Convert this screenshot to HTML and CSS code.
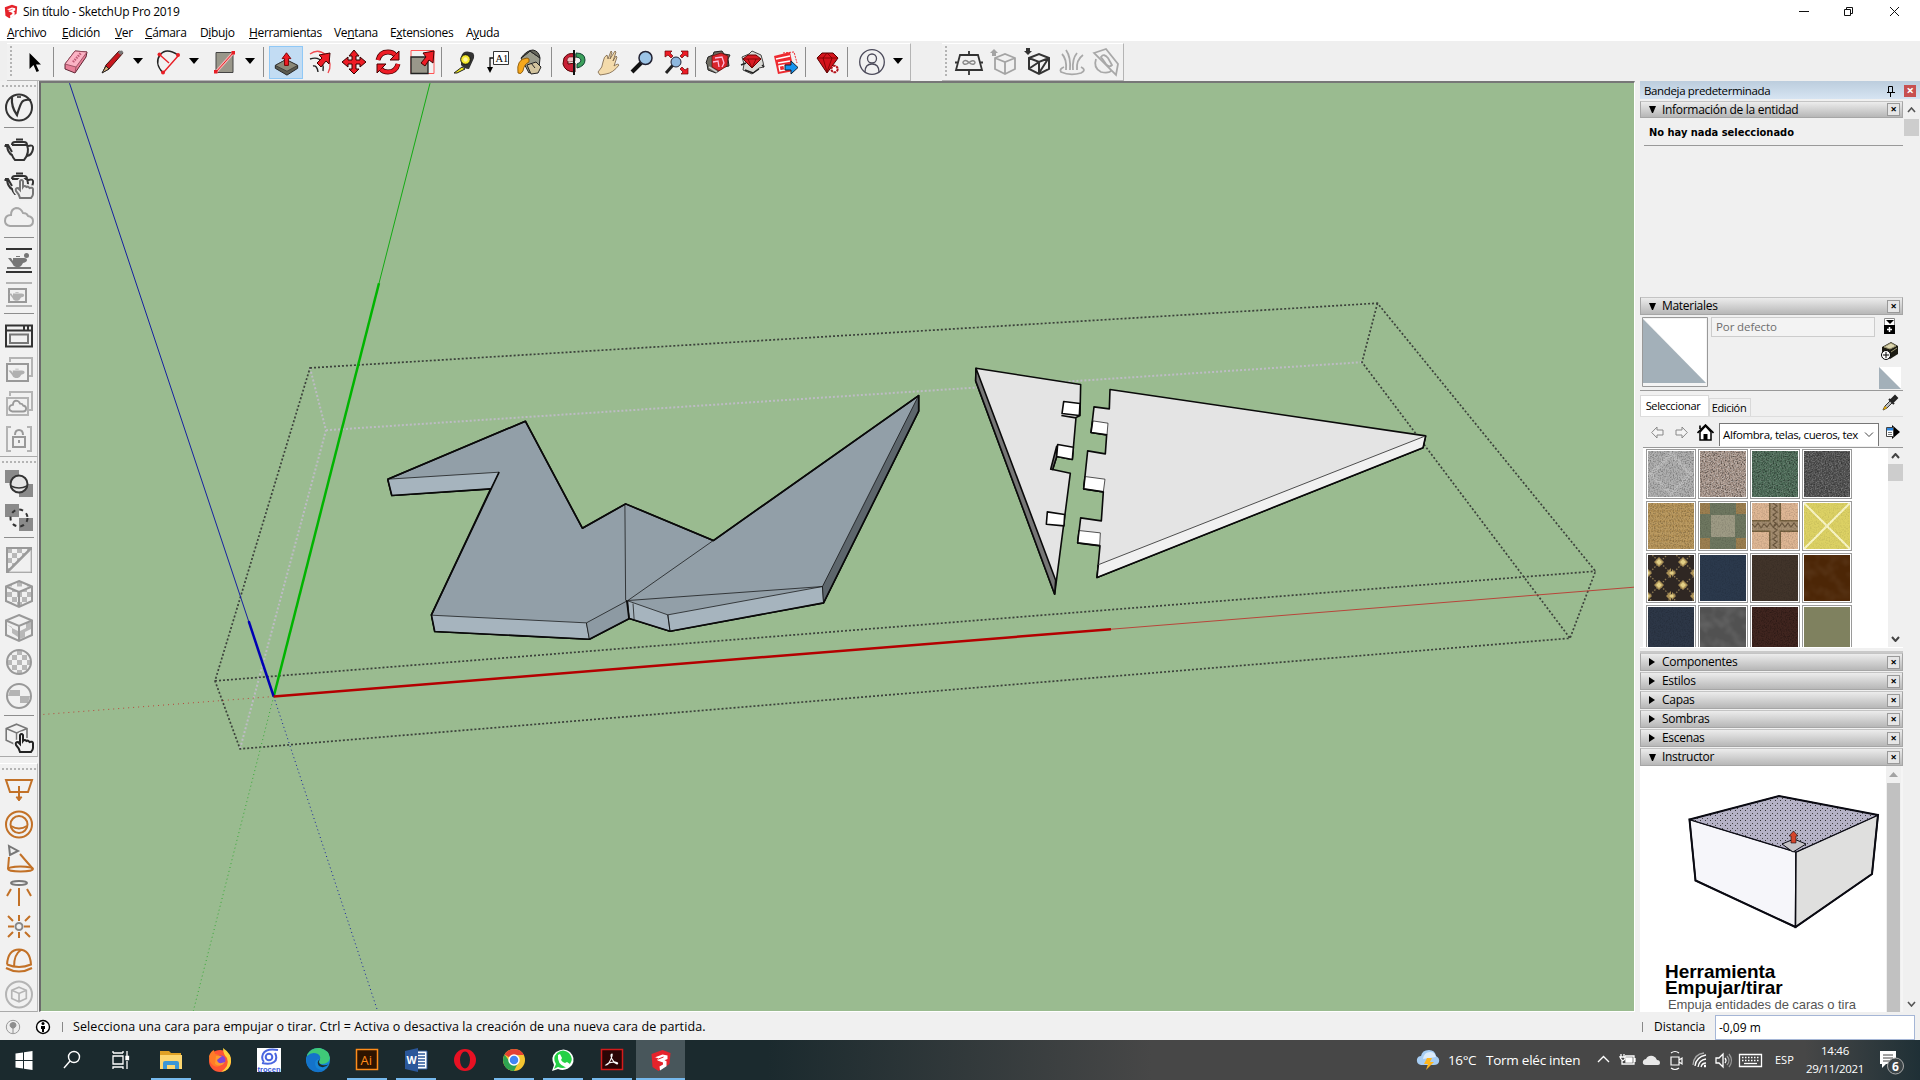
FILE: index.html
```html
<!DOCTYPE html>
<html lang="es">
<head>
<meta charset="utf-8">
<title>Sin título - SketchUp Pro 2019</title>
<link rel="stylesheet" href="styles.css">
</head>
<body>
<svg class="defs" width="0" height="0">
  <defs>
    <filter id="grain" x="0" y="0" width="100%" height="100%"><feTurbulence type="fractalNoise" baseFrequency=".75" numOctaves="2" seed="4"/><feColorMatrix values="0 0 0 0 0  0 0 0 0 0  0 0 0 0 0  2.6 0 0 0 -1.1"/></filter>
    <filter id="grainlight" x="0" y="0" width="100%" height="100%"><feTurbulence type="fractalNoise" baseFrequency=".7" numOctaves="2" seed="9"/><feColorMatrix values="0 0 0 0 1  0 0 0 0 1  0 0 0 0 1  2.6 0 0 0 -1.1"/></filter>
    <filter id="mottle" x="0" y="0" width="100%" height="100%"><feTurbulence type="fractalNoise" baseFrequency=".09" numOctaves="2" seed="2"/><feColorMatrix values="0 0 0 0 1  0 0 0 0 1  0 0 0 0 1  1.6 0 0 0 -.6"/></filter>
    <pattern id="dots" width="5" height="5" patternUnits="userSpaceOnUse"><g stroke="none"><rect width="5" height="5" fill="#b5b2c6"/><rect width="1" height="1" fill="#333"/><rect x="2" y="3" width="1" height="1" fill="#444"/></g></pattern>
    <pattern id="diamond" width="24" height="23" patternUnits="userSpaceOnUse"><rect width="24" height="23" fill="#2f2723"/><path d="M0 19 12 31M0 19 24-5M12 31 24 19M0-4 24 19" fill="none" stroke="#8a7650" stroke-width="1.300" stroke-dasharray="1.500 1.500"/><path d="M11 2l5 5-5 5-5-5zM-1 13l5 5-5 5zM23 13l-5 5 5 5z" fill="#a98f55"/><path d="M11 4l3 3-3 3-3-3zM0 16l2 2-2 2zM24 16l-3 2 3 2z" fill="#e2cf86"/></pattern>
    <pattern id="check" width="10" height="10" patternUnits="userSpaceOnUse"><path d="M0 0h5v5H0zM5 5h5v5H5z" fill="#b8b8b8"/></pattern>
    <path id="pot" d="M9 7Q9 4 12 4h9q3 0 3 3M13 1.500h7M9 7h15q3 8-3 15h-9q-2-2-3-5-4-2-5-9H1.500M9 14 5 7H2M25 8q6-2 5 3-1 6-6 7"/>
    <path id="minipot" d="M-5-3H6q3 0 3 2t-4 3q-2 4-4 4h-3q-3-1-4-4l-4-5h3l2 3zM-2-5h4v1h-4z"/>
    <path id="cloud" d="M8 25h18q5 0 5-5 0-4-5-5-1-3-5-3-2-5-7-5-5 1-5 7-6 0-6 6 0 4 5 5z"/>
    <path id="cube" d="M17 4 30 9.500V24L17 30 4 24V9.500zM4 9.500l13 5.500 13-5.500M17 15v15"/>
    <path id="handp" d="M16 30q-1-4-4-7-1-3 2-3l2 2V13q1.500-2 3 0v6q1.500-2 3.500 0 1.500-1 3 1 3-1 3.500 1v5q0 2-2 4z"/>
    <g id="sk"><path d="M1 5 12 1l8 3-1 11-11 7-6-4z" fill="#e5232b"/><path d="M4 8.500 12 5.500l5 1v3.500l-3 1.200 2 1v5l-6.500 4.300-.5-4 3.500-2v-2L7 11.500v-2z" fill="#fff"/><path d="M4 8.500l4 1.500 5-2" fill="none" stroke="#e5232b" stroke-width="1"/></g>
  </defs>
</svg>
<div class="app">
  <header class="titlebar">
    <svg class="logo" width="14" height="15" viewBox="0 0 21 23"><use href="#sk"/></svg>
    <span class="apptitle">Sin título - SketchUp Pro 2019</span>
    <svg class="winbtns" width="130" height="22" viewBox="0 0 130 22" fill="none" stroke="#111"><path d="M9 10.500h10M54.500 8.500h6v6h-6zM56.500 8.500v-2h6v6h-2M100 6l9 9M109 6l-9 9"/></svg>
  </header>
  <nav class="menu">
    <span style="width:55px"><u>A</u>rchivo</span><span style="width:53px"><u>E</u>dición</span><span style="width:30px"><u>V</u>er</span><span style="width:55px"><u>C</u>ámara</span><span style="width:49px">D<u>i</u>bujo</span><span style="width:85px"><u>H</u>erramientas</span><span style="width:56px">Ve<u>n</u>tana</span><span style="width:76px">E<u>x</u>tensiones</span><span>A<u>y</u>uda</span>
  </nav>
  <div class="toolbars">
    <div class="toolbar main">
      <i class="grip"></i>
      <svg class="ic" viewBox="0 0 34 34"><path d="M12.500 8v16l4-4 3 7 2.500-1-3-6.500h5z" fill="#000"/></svg>
      <i class="sep"></i>
      <svg class="ic" viewBox="0 0 34 34"><path d="M6 19 16 6l12 1-1 5-11 16-10-4z" fill="#e87f98" stroke="#5c2432"/><path d="M6 19 16 6l12 1-11 15z" fill="#fbb3c4" stroke="#8b4254" stroke-width=".8"/><path d="M17 22l-1 6" stroke="#8b4254" stroke-width=".8"/><path d="M14 17l8-9" stroke="#c05a76" stroke-width="2.500" stroke-dasharray="1.500 1"/></svg>
      <svg class="ic pencil" viewBox="0 0 34 34"><path d="M8 27l3-7L24 6l4 2-14 16z" fill="#c8171e" stroke="#40100c"/><path d="M7 28l4-7 3 3z" fill="#d8b078" stroke="#222"/><path d="M24 6l3-.5 1.500 2-2.500 2.500-3-2z" fill="#777"/></svg>
      <i class="drop"></i>
      <svg class="ic arc" viewBox="0 0 34 34" fill="none"><path d="M12 28Q3 18 9 10T27 10" stroke="#222" stroke-width="1.400"/><path d="M9 10 18 18M12 28 27 11" stroke="#e81e25" stroke-width="1.400"/><g fill="#e81e25"><circle cx="8.500" cy="9.500" r="2"/><circle cx="27" cy="10" r="2"/><circle cx="12" cy="27.500" r="2"/></g></svg>
      <i class="drop"></i>
      <svg class="ic rectt" viewBox="0 0 34 34"><path d="M9 7.500h17v20H9z" fill="#99978a" stroke="#444"/><path d="M9 27 26 8" stroke="#f4b5b5" stroke-width="3"/><path d="M9 27 26 8" stroke="#e81e25"/><path d="M7 25h3.500v3.500H7zM24.500 6H28v3.500h-3.500z" fill="#e81e25"/></svg>
      <i class="drop"></i>
      <i class="sep s2"></i>
      <svg class="ic active" viewBox="0 0 34 34"><path d="M6 20 17 14l12 6v3l-11 7L6 23z" fill="#5b5a4e" stroke="#222"/><path d="M6 20 17 14l12 6-11 6z" fill="#8b8978" stroke="#333" stroke-width=".8"/><path d="M15.500 20v-7H13l4.500-6 4.500 6h-2.500v7z" fill="#ee1c25" stroke="#700"/></svg>
      <svg class="ic" viewBox="0 0 34 34" fill="none"><path d="M7 9q8-6 16 1 7 9 2 18" stroke="#f04a50" stroke-width="1.300"/><path d="M7 14q9-3 12 4 2 4 1 8M10 21q4-1 5 6" stroke="#222" stroke-width="1.400"/><path d="M14 18l5-5-3-3 11-2-1 11-3-3-5 6z" fill="#ee1c25" stroke="#400"/></svg>
      <svg class="ic" viewBox="0 0 34 34"><path d="M17 5l5 6h-3v4h4v-3l6 5-6 5v-3h-4v5h3l-5 5-5-5h3v-5h-4v3l-6-5 6-5v3h4v-4h-3z" fill="#ee1c25" stroke="#300"/></svg>
      <svg class="ic" viewBox="0 0 34 34" fill="none"><path d="M7 15q2-8 10-8 5 0 7 3M27 19q-2 8-10 8-5 0-7-3" stroke="#400" stroke-width="5"/><path d="M28 6v9h-9zM6 28v-9h9z" fill="#ee1c25" stroke="#400"/><path d="M7 15q2-8 10-8 5 0 7 3M27 19q-2 8-10 8-5 0-7-3" stroke="#ee1c25" stroke-width="3.500"/></svg>
      <svg class="ic" viewBox="0 0 34 34"><path d="M6 5.500h23v23H6z" fill="none" stroke="#f55"/><path d="M6 12h17v16.500H6z" fill="#99978a" stroke="#222" stroke-width="1.300"/><path d="M16 18l5-6-3-4 11-2-1 12-4-3-4 6z" fill="#ee1c25" stroke="#400"/></svg>
      <i class="sep s3"></i>
      <svg class="ic" viewBox="0 0 34 34"><path d="M7 28l8-6 3 2-8 4z" fill="#eee813" stroke="#222"/><path d="M14 12q2-7 9-5 5 0 4 6l-5 11q-5 0-8-4z" fill="#333"/><circle cx="18.500" cy="14.500" r="4.800" fill="#f5e92a" stroke="#111"/><circle cx="18.500" cy="14.500" r="2.200" fill="#fff8a0"/></svg>
      <svg class="ic" viewBox="0 0 34 34"><path d="M12.500 6.500h15v13h-15z" fill="#fff" stroke="#333"/><path d="M12 13H9v12" fill="none" stroke="#111" stroke-width="1.300"/><path d="M6 22h6l-3 6z"/><text x="14.500" y="17" font-family="Liberation Serif,serif" font-size="10.500">A1</text></svg>
      <svg class="ic" viewBox="0 0 34 34"><path d="M6 13 15 6l10 7-1 10-10 5z" fill="#9a9b8b" stroke="#222"/><path d="M15 6q-7 6-9 7 6-8 12-8 6 1 7 8z" fill="#66675c" stroke="#222"/><path d="M3 28q-2-14 9-15 3 0 2 4-5 2-6 9-2 4-5 2z" fill="#f6a81c" stroke="#7c4b00" stroke-width=".8"/><path d="M12 20l9-3 5 5-3 6-7 1z" fill="#d3c49e" stroke="#222"/><path d="M16 18l4 5" stroke="#222"/></svg>
      <i class="sep s3"></i>
      <svg class="ic" viewBox="0 0 34 34"><path d="M7 13q4-6 11-4v4q-5-1-7 2v4l7-1v9q-10 0-12-8z" fill="#c92036" stroke="#500"/><path d="M19 8q9 0 9 7 0 6-8 8v-4q4-1 4-4-1-3-5-3z" fill="#3ba05b" stroke="#143"/><path d="M12 12q-4 4 0 5l6-1v-4z" fill="#f0c7c9" stroke="#500" stroke-width=".5"/><path d="M17 5v25" stroke="#111" stroke-width="2"/></svg>
      <svg class="ic" viewBox="0 0 34 34"><path d="M7 27q5-5 5-10 1-6 4-7l1 4 3-8 1 1-2 7 5-8 1 1-3 9 3-5 1 1-3 9q4-3 5-1-6 8-13 9l-6 1z" fill="#f4dbab" stroke="#766044" stroke-width=".8"/></svg>
      <svg class="ic" viewBox="0 0 34 34"><path d="M7 27l9-9" stroke="#111" stroke-width="4"/><circle cx="20.500" cy="13" r="6.500" fill="#9cc4e6" stroke="#223" stroke-width="1.500"/></svg>
      <svg class="ic" viewBox="0 0 34 34"><path d="M7 28l7-8" stroke="#222" stroke-width="3"/><circle cx="17" cy="17" r="5" fill="#8db7de" stroke="#223"/><path d="M6 6h7l-2 2 3 3-2 2-3-3-3 2zM29 6h-7l2 2-3 3 2 2 3-3 3 2zM29 29h-7l2-2-3-3 2-2 3 3 3-2z" fill="#ee1c25" stroke="#600" stroke-width=".7"/></svg>
      <i class="sep s3"></i>
      <svg class="ic" viewBox="0 0 34 34"><path d="M7 12l5-2 1-3 8-1 2 3 6 1-2 4 1 7-5 1-8 6-8-3-1-6-1-1z" fill="#6d6a60" stroke="#222"/><path d="M11 11l9-3 7 3-1 10-8 5-7-4z" fill="#d9252c" stroke="#500" stroke-width=".6"/><path d="M14 13l7-1 2 6-2 4M12 17l5-1 1 6" stroke="#fbd" fill="none" stroke-width="1.300"/><path d="M8 22l8 5" stroke="#ccc" stroke-width="1.500"/></svg>
      <svg class="ic" viewBox="0 0 34 34"><path d="M7 12l7-3 3-3 9 4 2 7 1 5-5 1-7 6-9-4 1-6z" fill="#d9d9d5" stroke="#444"/><path d="M6 20l5-2M10 25l8 3 6-4M27 20l2 2" stroke="#222" stroke-width="1.500" fill="none"/><path d="M8 14l5-4h8l5 4-9 9z" fill="#d91a22" stroke="#600"/><path d="M8 14h18M13 14l4 9 4-9" fill="none" stroke="#700" stroke-width=".8"/></svg>
      <svg class="ic" viewBox="0 0 34 34"><path d="M5 11l16-4 4 19-16 3z" fill="#ee2a30"/><path d="M7 14l14-3M9 18l12-2M10 21l5-1 1 5-5 1z" stroke="#fff" stroke-width="1.400" fill="none"/><path d="M14 8l11-1 3 11" stroke="#ee2a30" stroke-dasharray="2 1" fill="none"/><path d="M16 20h6v-4l7 6.500-7 6.500v-4h-6z" fill="#1593ef" stroke="#123"/></svg>
      <i class="sep s3"></i>
      <svg class="ic" viewBox="0 0 34 34"><path d="M6 13l5-5h11l5 5-11 15z" fill="#d4141c" stroke="#500"/><path d="M6 13h21M12 13l4 14 5-14-5-5z" fill="none" stroke="#700" stroke-width=".8"/><circle cx="23.500" cy="24" r="3.200" fill="#fff" stroke="#b4141c" stroke-width="2" stroke-dasharray="2.600 .7"/></svg>
      <i class="sep s4"></i>
      <svg class="ic user" viewBox="0 0 34 34" fill="none" stroke="#4b4a5a" stroke-width="1.300"><circle cx="17" cy="17" r="12.300"/><circle cx="17" cy="13.500" r="4.500"/><path d="M10 27q0-8 7-8t7 8"/></svg>
      <i class="drop"></i>
    </div>
    <div class="toolbar second">
      <i class="grip"></i>
      <svg class="ic" viewBox="0 0 34 34" fill="none" stroke="#333" stroke-width="1.800"><path d="M8 10h18l4 15H4zM17 6v4M17 25v5M3 17.500h3M28 17.500h3"/><path d="M17 17.500q-3-3-5-1.500-2 1.500 0 3 2 1 5-1.500t5-1.500q2 1.500 0 3-2 1-5-1.500z" stroke="#888" stroke-width="1.500"/></svg>
      <svg class="ic" viewBox="0 0 34 34" fill="none" stroke="#a4a4a4" stroke-width="1.800"><path d="M9 13l10-4 10 4v11l-10 5-10-5zM9 13l10 4 10-4M19 17v12"/><path d="M8 4l4 4h-2v3H6V8H4z" fill="#a4a4a4" stroke="none"/></svg>
      <svg class="ic" viewBox="0 0 34 34" fill="none" stroke="#333" stroke-width="2"><path d="M9 13l10-4 10 4v11l-10 5-10-5zM9 13l10 4 10-4M19 17v12M10 23l9-6M19 28l9-14"/><path d="M8 10L4 6h2V3h4v3h2z" fill="#333" stroke="none"/></svg>
      <svg class="ic" viewBox="0 0 34 34" fill="none" stroke="#a8a8a8" stroke-width="1.800"><path d="M12 25Q13 14 8 9M16 25Q17 12 12 5M19 25q-1-11 4-17M23 25q-1-10 6-15M10 22q-5 2-3 5 9 4 20 1 6-3 0-6"/></svg>
      <svg class="ic" viewBox="0 0 34 34" fill="none" stroke="#a8a8a8" stroke-width="1.800"><path d="M6 8l12-4 12 15-2 11zM8 14q-3 9 5 13 8 2 11-2"/><path d="M13 12q3-4 7 1l4 7q-3 3-6-1z"/></svg>
    </div>
  </div>
  <div class="work">
    <aside class="left">
      <div class="vbar">
        <i class="hgrip"></i>
        <svg class="vi" viewBox="0 0 34 34" fill="none" stroke="#333" stroke-width="2"><circle cx="17" cy="16.500" r="13"/><path d="M10 6q-1 10 5 18 3-10 5-13t9-2" stroke-width="2.200"/><path d="M15 6h4" stroke-width="1.600"/></svg>
        <i class="hsep"></i>
        <svg class="vi" viewBox="0 0 34 34"><use href="#pot" transform="translate(1 5)" fill="none" stroke="#333" stroke-width="2"/></svg>
        <svg class="vi" viewBox="0 0 34 34"><use href="#pot" transform="translate(1 5)" fill="none" stroke="#333" stroke-width="2"/><use href="#handp" fill="#f0f0f0" stroke="#f0f0f0" stroke-width="5" transform="translate(2 1)"/><use href="#handp" fill="#f0f0f0" stroke="#777" stroke-width="2" transform="translate(2 1)"/></svg>
        <svg class="vi" viewBox="0 0 34 34"><use href="#cloud" fill="none" stroke="#a6a6a6" stroke-width="2"/></svg>
        <i class="hsep"></i>
        <svg class="vi tall" viewBox="0 0 34 34"><path d="M4 6h26M4 29h26" stroke="#333" stroke-width="2"/><path d="M5 25h24" stroke="#777" stroke-width="2"/><use href="#minipot" x="16" y="18" fill="#777"/><circle cx="24.500" cy="12.500" r="2.500" fill="#777"/></svg>
        <svg class="vi" viewBox="0 0 34 34"><path d="M4 6h26M4 29h26" stroke="#b4b4b4" stroke-width="2"/><path d="M7 12h17v13H7z" stroke="#999" stroke-width="2" fill="none"/><use href="#minipot" transform="translate(15 19) scale(.8)" fill="#b0b0b0"/></svg>
        <i class="hsep"></i>
        <svg class="vi tall" viewBox="0 0 34 34" fill="none" stroke="#333" stroke-width="2"><path d="M4 6.500h26v21H4zM4 11.500h26M22 7v4M26 7v4"/><path d="M8 15.500h18v8.500H8z" stroke="#777"/></svg>
        <svg class="vi" viewBox="0 0 34 34" fill="none" stroke="#999" stroke-width="2"><path d="M8 9V5h22v18h-4" stroke="#b4b4b4"/><path d="M5 11h21v17H5z"/><use href="#minipot" transform="translate(15 20) scale(.85)" fill="#b0b0b0" stroke="none"/></svg>
        <svg class="vi" viewBox="0 0 34 34" fill="none" stroke="#b4b4b4" stroke-width="2"><path d="M8 9V5h22v18h-4M5 11h21v17H5z"/><use href="#cloud" transform="translate(5.500 9.500) scale(.6)" stroke="#999" stroke-width="3"/></svg>
        <svg class="vi" viewBox="0 0 34 34" fill="none" stroke="#b4b4b4" stroke-width="2"><path d="M9 6H5v24h4M25 6h4v24h-4"/><path d="M11 16h12v10H11zM13 14q0-5 4-5t4 5M17 19v3" stroke="#999"/></svg>
      </div>
      <div class="vbar">
        <i class="hgrip"></i>
        <svg class="vi" viewBox="0 0 34 34"><path d="M3 3h14v13H3zM17 17h14v13H17z" fill="#8a8a8a"/><circle cx="17" cy="17" r="8.500" fill="#e4e4e4" stroke="#333" stroke-width="2"/><path d="M9 19q8 4 16 0" fill="none" stroke="#333" stroke-width="1.500"/></svg>
        <svg class="vi" viewBox="0 0 34 34"><path d="M3 3h14v13H3zM17 17h14v13H17z" fill="#8a8a8a"/><circle cx="17" cy="17" r="8.500" fill="none" stroke="#333" stroke-width="2" stroke-dasharray="4 4"/></svg>
        <i class="hsep"></i>
        <svg class="vi tall" viewBox="0 0 34 34"><path d="M5 5h24v24H5z" fill="url(#check)" stroke="#999" stroke-width="2"/><path d="M7 29 29 7v22z" fill="#f0f0f0" stroke="#bbb" stroke-width="1"/><path d="M5 29 29 5" stroke="#999" stroke-width="2"/></svg>
        <svg class="vi" viewBox="0 0 34 34"><use href="#cube" fill="url(#check)" stroke="#999" stroke-width="2"/></svg>
        <svg class="vi" viewBox="0 0 34 34" fill="none" stroke="#999" stroke-width="2"><path d="M4 13l6 3v6l6 4v-6l-6-3zM18 20l6-3v-5l5-1v7l-6 3v5l-5 2z" fill="#b8b8b8" stroke="none"/><use href="#cube"/></svg>
        <svg class="vi" viewBox="0 0 34 34"><circle cx="17" cy="17" r="12" fill="url(#check)" stroke="#999" stroke-width="2"/></svg>
        <svg class="vi" viewBox="0 0 34 34"><path d="M8 11h10v6H6zM18 17h10l-2 7h-8z" fill="#b4b4b4"/><circle cx="17" cy="17" r="12" fill="none" stroke="#999" stroke-width="2"/></svg>
        <i class="hsep"></i>
        <svg class="vi tall" viewBox="0 0 34 34"><use href="#cube" transform="translate(1 0) scale(.8)" fill="none" stroke="#777" stroke-width="2"/><use href="#handp" fill="#f0f0f0" stroke="#f0f0f0" stroke-width="5" transform="translate(2 1)"/><use href="#handp" fill="#f0f0f0" stroke="#222" stroke-width="2" transform="translate(2 1)"/></svg>
      </div>
      <div class="vbar lights">
        <i class="hgrip"></i>
        <svg class="vi" viewBox="0 0 34 34" fill="none" stroke="#c27127" stroke-width="2"><path d="M4 6h26l-4 12H8zM17 12v14"/><path d="M14 23l3 4 3-4z" fill="#c27127" stroke-width="1"/></svg>
        <svg class="vi" viewBox="0 0 34 34" fill="none" stroke="#c27127" stroke-width="2"><circle cx="17" cy="16.500" r="13"/><circle cx="17" cy="16.500" r="8.500"/><path d="M9 18q8 5 16 0"/></svg>
        <svg class="vi" viewBox="0 0 34 34" fill="none" stroke="#c27127" stroke-width="2"><path d="M7 4l9 5-8 4z" stroke="#777"/><path d="M7 15L6 27M18 12l13 15"/><ellipse cx="18.500" cy="27" rx="12.500" ry="2.500"/></svg>
        <svg class="vi" viewBox="0 0 34 34" fill="none" stroke="#c27127" stroke-width="2"><ellipse cx="17" cy="7" rx="8" ry="2" stroke="#777"/><path d="M17 12v18M9 13l-4 7M25 13l4 7"/></svg>
        <svg class="vi" viewBox="0 0 34 34" fill="none" stroke="#c27127" stroke-width="2"><circle cx="17" cy="16.500" r="3.500" stroke="#888"/><path d="M17 5v6M17 22v6M6 16.500h6M22 16.500h6M6 6l5 5M23 22l5 5M28 6l-5 5M11 22l-5 5"/></svg>
        <svg class="vi" viewBox="0 0 34 34" fill="none" stroke="#c27127" stroke-width="2"><path d="M5 20.500Q6 5.500 17 5.500t12 15q-12 5-24 0M19 6q-7 4-7 17M4 24q13 7 26 0"/></svg>
        <svg class="vi" viewBox="0 0 34 34" fill="none" stroke="#b4b4b4" stroke-width="2"><circle cx="17" cy="16.500" r="13"/><use href="#cube" transform="translate(7.500 7) scale(.56)" stroke-width="3"/></svg>
      </div>
    </aside>
    <main class="viewport">
      <svg class="scene" viewBox="41 82.800 1593 928" preserveAspectRatio="none" fill="none">
        <path d="M310 367.700 326 430 240 748.700M326 430 1362 362" stroke="#bdbcc4" stroke-width="2" stroke-dasharray="2 2"/>
        <path d="M310 367.700 1377.500 303 1595.500 571 1570 638 240 748.700 215 680.700ZM215 680.700 1595.500 571M1377.500 303 1362 362 1570 638" stroke="#3c423b" stroke-width="1.700" stroke-dasharray="2 2"/>
        <path d="M273.700 696.300 430 83" stroke="#14aa14"/><path d="M273.700 696.300 69.500 83" stroke="#1520a0"/><path d="M273.700 696.300 1634 587" stroke="#b8453a"/>
        <path d="M273.700 696.300 40 714.500" stroke="#b8453a" stroke-dasharray="1 4"/><path d="M273.700 696.300 193 1012" stroke="#35a935" stroke-dasharray="1 3"/><path d="M273.700 696.300 378 1012" stroke="#1520a0" stroke-dasharray="1 3"/>
        <path d="M273.700 696.300 379 283" stroke="#00b400" stroke-width="2.500"/><path d="M273.700 696.300 248.700 621" stroke="#0000b4" stroke-width="2.500"/><path d="M273.700 696.300 1111 629" stroke="#b40000" stroke-width="2.500"/>
        <g class="model" transform="translate(360 380) scale(.36996 .33333)">
          <path class="edge" fill="#929fa8" d="M75 297 447 123 601 444 718 371 955 481 1510 46V93L1253 668 838 753 728 715 620 777 202 754 193 704 353 326 86 346z"/>
          <path class="thin" fill="#a6b4be" d="M75 297 376 276 353 326 86 346zM193 705 612 728 620 777 202 754zM832 704 1250 619 1253 668 838 753zM724 662 832 704 838 753 728 715z"/>
          <path class="thin" fill="#8d9aa3" d="M612 728 722 662 728 715 620 777z"/>
          <path class="thin" fill="#5d666c" d="M1510 46V93L1253 668 1250 619z"/>
          <path class="thin" d="M716 371 718 661M955 481 724 661 1250 619M738 670 741 718"/>
          <path class="edge" d="M721 660 727 715M75 297 447 123 601 444 718 371 955 481 1510 46V93L1253 668 838 753 728 715 620 777 202 754 193 704 376 276M353 326 86 346 75 297"/>
        </g>
        <g class="model" transform="translate(940 340) scale(.33333)">
          <path class="edge" fill="#e4e4e4" d="M108 84 422 133 420 226 408 232 397 358 350 349 338 388 391 399 344 762 107 122z"/>
          <path class="edge" fill="#767676" d="M108 84 347 720 344 762 107 122zM350 318 350 350 338 388 332 387z"/>
          <path class="edge" fill="#fff" d="M371 184 420 190 418 226 366 220zM353 313 400 321 397 358 350 349zM322 515 374 523 372 557 319 552z"/>
          <path class="edge" d="M364 226 408 233"/>
          <path class="edge" fill="#e4e4e4" d="M510 148 1457 287 1449 323 471 712 480 617 413 608 422 533 484 542 490 455 431 446 443 332 496 341 500 284 453 277 462 200 508 206z"/>
          <path class="thin" fill="#f1f1f1" d="M474 674 1457 287 1449 323 471 712z"/>
          <path class="edge" d="M1457 287 1449 323 471 712 475 674"/>
          <path class="thin" fill="#fff" d="M458 242 504 249 501 284 453 277zM435 409 495 417 490 455 431 446zM417 571 481 578 479 616 413 608z"/>
          <path class="edge" d="M458 242 453 277 501 284M435 409 431 446 490 455M417 571 413 608 479 616"/>
        </g>
      </svg>
    </main>
    <aside class="tray">
      <div class="traytitle"><span>Bandeja predeterminada</span><svg width="10" height="12" viewBox="0 0 10 12" fill="none" stroke="#000"><path d="M2.500 1.500h4v6h-4zM6.500 2v5M1 7.500h8M4.500 8v4"/></svg><b class="close">×</b></div>
      <div class="traybody">
        <div class="panels">
          <div class="head first"><i class="open"></i><span>Información de la entidad</span><b>×</b></div>
          <div class="info"><strong>No hay nada seleccionado</strong></div>
          <div class="head"><i class="open"></i><span>Materiales</span><b>×</b></div>
          <div class="matTop">
            <svg class="preview" width="67" height="71" viewBox="0 0 67 71"><path d="M.5.500h65v69H.5z" fill="#f4f4f4" stroke="#999"/><path d="M2 2h62v64z" fill="#fff"/><path d="M1 2 64 66H1z" fill="#a3b0b9"/></svg>
            <div class="matname">Por defecto</div>
            <div class="mattools">
              <svg width="12" height="17" viewBox="0 0 12 17"><path d="M.5.500h10v7H.5z" fill="#fff" stroke="#888"/><path d="M2 2h8L6 6z"/><path d="M0 7h11v9H0z"/><path d="M5.500 9v5M3 11.500h5" stroke="#fff" stroke-width="1.500"/></svg>
              <svg width="20" height="20" viewBox="0 0 20 20"><path d="M2 6 11 1l7 4v8l-8 5-8-4z" fill="#1c1b12"/><path d="M4 6l7-4 5 3-6 3zM11 11l6-4" fill="#dcd6ae" stroke="#9b9570"/><circle cx="6" cy="14" r="4.500" fill="#fff" stroke="#000"/><path d="M6 11v6M3 14h6" stroke="#000"/></svg>
              <svg width="22" height="22" viewBox="0 0 22 22"><path d="M0 0h22v22z" fill="#fff"/><path d="M0 0 22 22H0z" fill="#a3b0b9"/></svg>
            </div>
          </div>
          <div class="tabs"><span class="tab on">Seleccionar</span><span class="tab">Edición</span><svg width="18" height="18" viewBox="0 0 18 18"><path d="M2 16l2-4 6-6 2 2-6 6z" fill="#bbb" stroke="#333"/><path d="M2 16l2-4 2 2z" fill="#e5a800"/><path d="M8 5l5 5M10 6l4-4 2 2-4 4z" fill="#333" stroke="#222" stroke-width="2"/></svg></div>
          <div class="nav">
            <svg class="n1" width="13" height="13" viewBox="0 0 13 13" fill="#f4f4f4" stroke="#888"><path d="M.7 6.500 6 1v3h6v5H6v3z"/></svg>
            <svg class="n2" width="13" height="13" viewBox="0 0 13 13" fill="#f4f4f4" stroke="#888"><path d="M12.300 6.500 7 1v3H1v5h6v3z"/></svg>
            <svg class="n3" width="17" height="17" viewBox="0 0 17 17"><path d="M3 8v8h11V8L8.500 2z" fill="#fff" stroke="#000" stroke-width="1.500"/><path d="M.5 9 8.500 1l8 8M3 5V1.500" fill="none" stroke="#000" stroke-width="1.600"/><path d="M6.500 10h4v6h-4z"/></svg>
            <div class="select"><span>Alfombra, telas, cueros, tex</span><svg width="10" height="6" viewBox="0 0 10 6"><path d="M1 .5l4 4 4-4" fill="none" stroke="#444"/></svg></div>
            <svg class="n4" width="14" height="14" viewBox="0 0 14 14"><path d="M6 0l8 7-8 7z"/><path d="M.5 2.500h7v9h-7z" fill="#fff" stroke="#444"/><path d="M1 3h6v2.500H1z" fill="#2a86e0"/><path d="M2 7.500h4M2 9.500h4" stroke="#777"/></svg>
          </div>
          <div class="library">
            <div class="swatches">
              <svg viewBox="0 0 46 46"><rect width="46" height="46" fill="#b0b0b0"/><path d="M23 3 43 23 23 43 3 23z" fill="none" stroke="#bdbdbd" stroke-width="4"/><rect width="46" height="46" filter="url(#grain)" opacity=".3"/></svg>
              <svg viewBox="0 0 46 46"><rect width="46" height="46" fill="#a8958a"/><rect width="46" height="46" filter="url(#grain)" opacity=".5"/><rect width="46" height="46" filter="url(#grainlight)" opacity=".4"/></svg>
              <svg viewBox="0 0 46 46"><rect width="46" height="46" fill="#4d6c58"/><rect width="46" height="46" filter="url(#grain)" opacity=".45"/><rect width="46" height="46" filter="url(#grainlight)" opacity=".2"/></svg>
              <svg viewBox="0 0 46 46"><rect width="46" height="46" fill="#4f4f4f"/><rect width="46" height="46" filter="url(#grain)" opacity=".35"/><rect width="46" height="46" filter="url(#grainlight)" opacity=".25"/></svg>
              <svg viewBox="0 0 46 46"><rect width="46" height="46" fill="#bb9a60"/><path d="M0 3h46M0 8h46M0 13h46M0 18h46M0 23h46M0 28h46M0 33h46M0 38h46M0 43h46" stroke="#a88448" stroke-dasharray="2 1"/><rect width="46" height="46" filter="url(#grain)" opacity=".25"/></svg>
              <svg viewBox="0 0 46 46"><rect width="46" height="46" fill="#6e7760"/><path d="M0 0h10v11H0zM36 0h10v11H36zM0 35h10v11H0zM36 35h10v11H36z" fill="#9c7f50"/><path d="M11 12h24v22H11z" fill="#9d9a84"/><rect width="46" height="46" filter="url(#grain)" opacity=".12"/></svg>
              <svg viewBox="0 0 46 46"><rect width="46" height="46" fill="#deb694"/><path d="M0 23h46M23 0v46" stroke="#75603f" stroke-width="12"/><path d="M0 23h46M23 0v46" stroke="#a48d70" stroke-width="9"/><path d="M0 21l3 3 3-4 3 5 3-4 3 3 3-4 3 4 3-4 3 4 3-4 3 4 3-4 3 4 3-4 3 4M21 0l4 3-4 3 4 3-4 3 4 3-4 3 4 3-4 3 4 3-4 3 4 3-4 3 4 3-4 3 4 3" fill="none" stroke="#6d5940" stroke-width="1.200"/><rect width="46" height="46" filter="url(#grain)" opacity=".15"/></svg>
              <svg viewBox="0 0 46 46"><rect width="46" height="46" fill="#dcd164"/><path d="M0 0 46 46M46 0 0 46" stroke="#f9f6c6" stroke-width="2"/><rect width="46" height="46" filter="url(#grain)" opacity=".08"/></svg>
              <svg viewBox="0 0 46 46"><rect width="46" height="46" fill="url(#diamond)"/></svg>
              <svg viewBox="0 0 46 46"><rect width="46" height="46" fill="#2b394c"/><rect width="46" height="46" filter="url(#grain)" opacity=".1"/></svg>
              <svg viewBox="0 0 46 46"><rect width="46" height="46" fill="#41342a"/><rect width="46" height="46" filter="url(#grain)" opacity=".12"/></svg>
              <svg viewBox="0 0 46 46"><rect width="46" height="46" fill="#4c2606"/><rect width="46" height="46" filter="url(#mottle)" opacity=".07"/></svg>
              <svg viewBox="0 0 46 46"><rect width="46" height="46" fill="#2d3747"/><rect width="46" height="46" filter="url(#grain)" opacity=".15"/></svg>
              <svg viewBox="0 0 46 46"><rect width="46" height="46" fill="#515151"/><rect width="46" height="46" filter="url(#mottle)" opacity=".12"/></svg>
              <svg viewBox="0 0 46 46"><rect width="46" height="46" fill="#40251f"/><rect width="46" height="46" filter="url(#grain)" opacity=".3"/></svg>
              <svg viewBox="0 0 46 46"><rect width="46" height="46" fill="#7f815f"/></svg>
            </div>
            <div class="scroll lib"><svg width="9" height="6" viewBox="0 0 9 6"><path d="M1 5l3.500-4L8 5" fill="none" stroke="#444" stroke-width="2"/></svg><i></i><svg width="9" height="6" viewBox="0 0 9 6"><path d="M1 1l3.500 4L8 1" fill="none" stroke="#444" stroke-width="2"/></svg></div>
          </div>
          <div class="split"></div>
          <div class="head"><i class="shut"></i><span>Componentes</span><b>×</b></div>
          <div class="head"><i class="shut"></i><span>Estilos</span><b>×</b></div>
          <div class="head"><i class="shut"></i><span>Capas</span><b>×</b></div>
          <div class="head"><i class="shut"></i><span>Sombras</span><b>×</b></div>
          <div class="head"><i class="shut"></i><span>Escenas</span><b>×</b></div>
          <div class="head"><i class="open"></i><span>Instructor</span><b>×</b></div>
          <div class="instructor">
            <div class="lesson">
              <svg width="246" height="196" viewBox="1640 766 246 196" stroke="#0a0a12"><path d="M1689.500 819.500 1796 852 1795.500 927 1695.500 880.500z" fill="#f6f6fa" stroke-width="1.500"/><path d="M1796 852 1878 815 1872 874 1795.500 927z" fill="#dfdfde" stroke-width="1.500"/><path d="M1689.500 819.500 1779 796 1878 815 1796 852z" fill="url(#dots)" stroke-width="1"/><path d="M1878 815 1779 796 1689.500 819.500 1695.500 880.500 1795.500 927 1872 874z" fill="none" stroke-width="2"/><path d="M1782 844 1794 839 1806 844 1793 852z" fill="#c6c4c8"/><path d="M1791 843v-7h-2l4.500-5 4.500 5h-2v7z" fill="#d4452c" stroke-width=".6"/></svg>
              <h1>Herramienta<br>Empujar/tirar</h1>
              <p>Empuja entidades de caras o tira</p>
            </div>
            <div class="scroll ins"><svg width="9" height="5" viewBox="0 0 9 5"><path d="M0 5l4.500-5L9 5z" fill="#a3a3a3"/></svg><i></i></div>
          </div>
        </div>
        <div class="scroll outer"><svg width="9" height="6" viewBox="0 0 9 6"><path d="M1 5l3.500-4L8 5" fill="none" stroke="#555" stroke-width="1.600"/></svg><i></i><svg width="9" height="6" viewBox="0 0 9 6"><path d="M1 1l3.500 4L8 1" fill="none" stroke="#555" stroke-width="1.600"/></svg></div>
      </div>
    </aside>
  </div>
  <footer class="status">
    <svg class="geo" width="50" height="18" viewBox="0 0 50 18"><circle cx="8" cy="9" r="6.700" fill="#eee" stroke="#999"/><path d="M8 15V10M8 4.500q3 0 3 2.500 0 2-2 3H7Q5 9 5 7t3-2.500z" fill="#8e8e8e" stroke="#8e8e8e"/><circle cx="38" cy="9" r="6.500" fill="#fff" stroke="#000" stroke-width="1.400"/><circle cx="38" cy="5.500" r="1.500"/><path d="M36 8h4v3h-1v3h-2v-3h-1z"/></svg>
    <i class="bar"></i>
    <span class="hint">Selecciona una cara para empujar o tirar. Ctrl = Activa o desactiva la creación de una nueva cara de partida.</span>
    <i class="bar b2"></i>
    <label>Distancia</label>
    <div class="vcb">-0,09 m</div>
  </footer>
  <div class="taskbar">
    <div class="apps">
      <span><svg viewBox="0 0 26 26"><path d="M4.500 6.500l7.500-1v7.500H4.500zM13 5.300l8.500-1.300v9H13zM4.500 14H12v7.500l-7.500-1zM13 14h8.500v9L13 21.700z" fill="#fff"/></svg></span>
      <span><svg viewBox="0 0 26 26" fill="none" stroke="#fff" stroke-width="1.400"><circle cx="14" cy="10" r="5.500"/><path d="M10 14l-6 7"/></svg></span>
      <span><svg viewBox="0 0 26 26" fill="none" stroke="#fff" stroke-width="1.300"><path d="M4 6V4M14 6V4M4 6h10M4 9h10v8H4zM4 22v-2h10v2M18 4v5M18 14v8"/><path d="M17 9.500h2.500v3H17z" fill="#fff"/></svg></span>
      <span class="run"><svg viewBox="0 0 26 26"><path d="M2 4h9l2 2h10v5H2z" fill="#dfa125"/><path d="M2 8h22v14H2z" fill="#fcd670"/><path d="M5 22v-6q0-2 2-2h12q2 0 2 2v6h-4v-4H9v4z" fill="#3b96d6"/></svg></span>
      <span><svg viewBox="0 0 26 26"><circle cx="13" cy="14" r="11" fill="#ff5634"/><path d="M16 1q9 6 8 14-1 9-10 10 9-6 6-14-4-4-4-10z" fill="#ffd23c"/><path d="M2 9q2-5 5-6l1 4q5 1 6 3l-4 3q0 4 5 4-3 4-8 2-5-3-5-10z" fill="#ff7c28"/><circle cx="14" cy="13" r="4.500" fill="#8046d8"/><path d="M9 9h6l-5 4q1 5 8 2-4 6-10 2z" fill="#ff9b2f"/></svg></span>
      <span><svg viewBox="0 0 26 26"><path d="M1 1h24v24H1z" fill="#fff"/><circle cx="13" cy="10" r="3.300" fill="none" stroke="#4a66e0" stroke-width="2"/><path d="M22 3Q10 1 7 7q-2 5 1 8M19 6q3 6-1 9-4 3-12 1" fill="none" stroke="#4a66e0" stroke-width="2"/><text x="1.500" y="24.500" font-size="7.500" font-weight="bold" fill="#3558d8" font-family="Liberation Sans,sans-serif" textLength="23">trocen</text></svg></span>
      <span><svg viewBox="0 0 26 26"><circle cx="13" cy="13" r="12" fill="#1684d5"/><path d="M2 8Q6 0 15 1q9 2 10 10-1 6-9 6-3-1-1-4 0-5-6-5-5 0-7 4z" fill="#3fc978"/><path d="M2 9q5-5 11-2 3 2 2 5-5 0-5 5 1 7 10 6-8 5-15-1Q0 17 2 9z" fill="#1473ca"/><path d="M15 12q-3 4 2 6 4 1 7-1-5 5-10 2-3-4 1-7z" fill="#1b2a2f"/></svg></span>
      <span class="run"><svg viewBox="0 0 26 26"><path d="M2.500 2.500h21v20h-21z" fill="#2d1400" stroke="#ff8c1a" stroke-width="1.500"/><text x="6.500" y="18" font-size="13" fill="#ff8c1a" font-family="Open Sans,sans-serif">Ai</text></svg></span>
      <span class="run"><svg viewBox="0 0 26 26"><path d="M13 4h11v18H13z" fill="#fff" stroke="#2b579a"/><path d="M15 7h7M15 10h7M15 13h7M15 16h7M15 19h7" stroke="#2b579a" stroke-width="1.300"/><path d="M2 4l13-3v24L2 22z" fill="#2b579a"/><text x="3.500" y="17" font-size="10.500" font-weight="bold" fill="#fff" font-family="Open Sans,sans-serif">W</text></svg></span>
      <span><svg viewBox="0 0 26 26"><ellipse cx="13" cy="13" rx="11" ry="11" fill="#e81123"/><ellipse cx="13" cy="13" rx="5" ry="8.500" fill="#1b2a2f"/></svg></span>
      <span class="run"><svg viewBox="0 0 26 26"><circle cx="13" cy="13" r="11" fill="#f4c430"/><path d="M13 13 3.500 7.500Q7 2 13 2q7 0 10 6H13z" fill="#e34133"/><path d="M3.500 7.500Q0 15 5 21q4 3 8 3l4-8-8-1z" fill="#2ea351"/><circle cx="13" cy="13" r="5" fill="#4285f4" stroke="#fff" stroke-width="1.500"/></svg></span>
      <span class="run"><svg viewBox="0 0 26 26"><path d="M2 24l2-6Q0 10 6 5q8-5 14 0 6 6 2 13-6 7-14 4z" fill="#fff"/><path d="M4 22l2-5Q2 11 7 6q6-5 12 0 5 6 1 11-5 6-12 3z" fill="#25d045"/><path d="M8 8l2-1 2 4-1 2q2 3 4 3l2-1 3 2q-1 4-5 3Q7 17 8 8z" fill="#fff"/></svg></span>
      <span class="run"><svg viewBox="0 0 26 26"><path d="M2.500 2.500h21v20h-21z" fill="#2a0505" stroke="#d31b1b" stroke-width="1.500"/><path d="M13 7q-2 0 0 5 2 4 5 5 2-1-2-2-6 0-9 3 2 0 4-4 3-6 2-7z" fill="none" stroke="#fff" stroke-width="1.100"/></svg></span>
      <span class="run now"><svg viewBox="0 0 26 26"><use href="#sk" transform="translate(2.500 2)"/></svg></span>
    </div>
    <div class="systray">
      <svg class="wx" width="24" height="22" viewBox="0 0 24 22"><path d="M5 16q-5-1-4-6 1-3 4-3 1-6 8-6 6 0 7 6 4 2 3 6-1 3-5 3z" fill="#a6cdf4"/><path d="M7 10q1-7 7-7 5 0 6 5" fill="#dcecfb"/><path d="M11 9h5l-2 4h4l-8 8 2-6H8z" fill="#ffb61c"/></svg>
      <span class="temp">16°C</span><span class="cond">Torm eléc inten</span>
      <svg class="tr" width="190" height="24" viewBox="1592 1048 190 24" fill="none" stroke="#fff" stroke-width="1.300"><path d="M1598 1062l5.500-5.500 5.500 5.500M1625 1056h9v8h-12v-3M1635 1058v4M1621 1054v3M1624 1054v3M1620 1057h5v2q-2 3-4 0zM1622 1060v3"/><path d="M1626 1058h6v4h-6z" fill="#fff"/><path d="M1646 1065q-4 0-3-4 1-2 3-2 2-4 7-3 3 1 4 4 3 0 3 3 0 2-2 2z" fill="#e8e8e8" stroke="none"/><path d="M1671 1057h8v8h-8zM1679 1060l3-2v6l-3-2M1671 1053q4-3 8 0M1671 1068q4 3 8 0" stroke-width="1.200"/><path d="M1695 1066q1-9 11-11M1698 1067q1-7 8-8M1701 1067q1-4 5-4" /><path d="M1704 1066h2" stroke-width="2.500"/><path d="M1693 1065q1-11 11-12" stroke="#aaa"/><path d="M1716 1058h3l4-4v13l-4-4h-3zM1725 1058q2 2.500 0 5"/><path d="M1727 1056q4 4.500 0 9M1729 1054q5 6.500 0 13" stroke="#999"/><path d="M1739.500 1054.500h22v12h-22z"/><path d="M1742 1057.500h18M1742 1060.500h18" stroke-dasharray="1.500 1.500"/><path d="M1744 1063.500h13"/></svg>
      <span class="lang">ESP</span>
      <span class="clock">14:46<br>29/11/2021</span>
      <svg class="note" width="30" height="28" viewBox="0 0 30 28"><path d="M1 2h16v13H7l-4 4v-4H1z" fill="#fff"/><path d="M4 6h10M4 9h10M4 12h6" stroke="#444"/><circle cx="16.500" cy="17" r="8" fill="#3a4346" stroke="#aaa"/><text x="13" y="21.500" font-size="12" font-weight="bold" fill="#fff" font-family="Open Sans,sans-serif">6</text></svg>
    </div>
  </div>
</div>
</body>
</html>
```
FILE: styles.css
```css
* { box-sizing: border-box; }
body { margin: 0; background: #f0f0f0; overflow: hidden; }
svg { display: block; flex: none; }
svg.defs { position: absolute; }
i { display: block; flex: none; }
.app { width: 1920px; height: 1080px; display: flex; flex-direction: column; font: 12px/16px "Open Sans", "Noto Sans", sans-serif; color: #000; white-space: nowrap; }
.titlebar { height: 23px; background: #fff; display: flex; align-items: center; padding-left: 4px; }
.apptitle { margin-left: 5px; flex: 1; letter-spacing: -.3px; }
.menu { height: 18px; background: #fff; display: flex; padding-left: 7px; line-height: 20px; letter-spacing: -.35px; }
.menu span { flex: none; }
.menu u { text-underline-offset: 1px; }

.toolbars { height: 40px; background: #efefef; display: flex; gap: 31px; padding: 2px 0 0 7px; }
.toolbar { height: 38px; display: flex; align-items: center; background: #f1f1f1; border: solid #b4b4b4; border-width: 0 1px 1px 0; border-top: 1px solid #fff; flex: none; }
.main { width: 904px; }
.second { width: 182px; }
.grip { width: 2px; height: 32px; margin: 0 5px 0 3px; background: repeating-linear-gradient(#b4b4b4 0 2px, transparent 2px 4px); }
.ic { width: 34px; height: 34px; overflow: visible; }
.active { background: #c2dcf3; outline: 1px solid #90c8f6; outline-offset: -1px; height: 33px; }
.sep { width: 1px; height: 30px; background: #8d8d8d; margin: 0 5px 0 2px; }
.pencil { margin-left: 2px; }
.drop { width: 0; height: 0; border: 5px solid transparent; border-top: 6px solid #000; border-bottom: 0; margin: 0 0 3px 4px; }
.arc { margin-left: 8px; }
.rectt { margin-left: 8px; }
.s2 { margin-left: 8px; }
.s4 { margin-right: 7px; }

.work { height: 931px; display: flex; }
.left { width: 39px; flex: none; display: flex; flex-direction: column; }
.vbar { width: 38px; background: #f1f1f1; border-right: 1px solid #bbb; border-bottom: 1px solid #aaa; display: flex; flex-direction: column; align-items: center; padding-top: 4px; height: 376px; flex: none; }
.vbar + .vbar { height: 300px; }
.vbar.lights { height: 249px; margin-top: 6px; border-top: 1px solid #fff; }
.hgrip { width: 34px; height: 2px; margin-bottom: 4px; background: repeating-linear-gradient(90deg, #b4b4b4 0 2px, transparent 2px 4px); }
.vi { width: 34px; height: 34px; }
.hsep { width: 30px; height: 1px; background: #8d8d8d; margin: 2px 0 5px; }

.viewport { flex: none; width: 1596px; height: 931px; background: #9abb90; border: 2px solid #6b6b6b; border-top-color: #777; border-right: 1px solid #fff; border-bottom: 1px solid #fff; }
.scene { width: 100%; height: 100%; }
.model path { vector-effect: non-scaling-stroke; stroke-linejoin: round; stroke: #0a0a0a; }
.model .edge { stroke-width: 1.6px; }
.model .thin { stroke-width: .7px; }

.tray { flex: none; margin-left: 5px; width: 280px; display: flex; flex-direction: column; }
.traytitle { height: 18px; background: linear-gradient(#bccddd, #d6e4f2); display: flex; align-items: center; padding: 1px 4px 0; font-size: 11.500px; letter-spacing: -.35px; }
.traytitle span { flex: 1; }
.traytitle .close { width: 12px; height: 12px; margin-left: 8px; background: #c75050; color: #fff; font-size: 13px; line-height: 11px; text-align: center; }
.traybody { display: flex; height: 913px; padding-top: 2px; }
.panels { width: 263px; flex: none; display: flex; flex-direction: column; }
.head { height: 18px; margin-bottom: 1px; flex: none; display: flex; align-items: center; background: linear-gradient(#ececec, #b7b7b7); border: 1px solid #a6a6a6; border-top-color: #c4c4c4; font-size: 12px; letter-spacing: -.3px; padding-left: 8px; }
.head.first { height: 17px; margin-bottom: 2px; line-height: 14px; }
.head span { margin-left: 6px; flex: 1; }
.head b { width: 13px; height: 13px; margin-right: 2px; background: #e6e6e6; border: 1px solid #999; font-size: 11px; line-height: 10px; text-align: center; }
.open { width: 7px; border: 3.500px solid transparent; border-top: 7px solid #000; border-bottom: 0; }
.shut { width: 7px; border: 4px solid transparent; border-left: 6px solid #000; border-right: 0; }
.info { height: 177px; padding: 5px 0 0 4px; }
.info strong { display: block; height: 22px; border-bottom: 1px solid #999; padding-left: 5px; font: bold 11px/17px "DejaVu Sans Condensed", sans-serif; margin-top: -1px; }
.matTop { height: 75px; display: flex; padding: 1px 0 0 2px; border-bottom: 1px solid #999; }
.matname { width: 164px; height: 20px; margin-left: 2px; background: #f3f3f3; border: 1px solid #ccc; color: #6d6d6d; font-size: 11.500px; letter-spacing: -.1px; line-height: 17px; padding-left: 4px; }
.mattools { flex: 1; display: flex; flex-direction: column; align-items: center; padding: 1px 0 0 2px; gap: 6px; }
.tabs { height: 26px; display: flex; align-items: flex-end; font-size: 11px; line-height: 18px; letter-spacing: -.35px; padding-top: 5px; flex: none; border-bottom: 1px solid #ddd; }
.tab { border: 1px solid #d9d9d9; border-bottom: 0; height: 18px; width: 42px; text-align: center; padding-right: 2px; }
.tab.on { width: 69px; height: 21px; background: #fff; padding-right: 3px; line-height: 19px; }
.tabs svg { margin: 0 0 4px 130px; }
.nav { height: 31px; display: flex; align-items: center; border-bottom: 1px solid #999; margin-left: 3px; flex: none; }
.n1 { margin-left: 8px; } .n2 { margin-left: 11px; } .n3 { margin-left: 9px; } .n4 { margin-left: 7px; }
.select { width: 160px; height: 23px; margin: 5px 0 0 5px; border: 1px solid #777; border-bottom: 0; background: #fff; display: flex; align-items: center; padding: 0 4px 0 3px; justify-content: space-between; letter-spacing: -.38px; font-size: 11.500px; }
.library { height: 199px; margin-left: 3px; display: flex; overflow: hidden; background: #fff; flex: none; }
.swatches { width: 245px; padding: 1px 0 0 3px; display: grid; grid-template-columns: repeat(4, 50px); grid-auto-rows: 50px; gap: 2px; align-content: start; }
.swatches svg { width: 50px; height: 50px; border: 1px solid #9a9a9a; padding: 1px; background: #fff; }
.scroll { display: flex; flex-direction: column; align-items: center; }
.scroll i { background: #cdcdcd; }
.lib { width: 15px; background: #f0f0f0; padding: 5px 0; }
.lib i { width: 15px; height: 17px; margin: 5px 0 auto; }
.split { height: 6px; border-top: 1px solid #fff; border-bottom: 2px solid #c9c9c9; flex: none; }
.instructor { flex: 1; display: flex; background: #fff; margin-top: -1px; overflow: hidden; }
.lesson { width: 246px; }
.lesson h1 { margin: 2px 0 0 25px; font: bold 19px/16px "Liberation Sans", sans-serif; letter-spacing: -.05px; }
.lesson p { margin: 1px 0 0 28px; font: 13px/15px "Liberation Sans", sans-serif; letter-spacing: -.07px; color: #555; }
.ins { width: 17px; background: #f0f0f0; padding-top: 6px; border-right: 2px solid #f5f5f5; }
.ins i { width: 13px; flex: 1; margin-top: 6px; background: #c1c1c1; }
.outer { width: 17px; padding: 6px 0 5px; }
.outer i { width: 15px; height: 17px; margin: 6px 0 auto; }

.status { height: 28px; background: #f0f0f0; display: flex; align-items: center; flex: none; padding-top: 1px; }
.geo { margin-left: 5px; }
.bar { width: 1px; height: 10px; background: #888; margin-left: 7px; }
.hint { margin-left: 10px; width: 1569px; font-size: 12.500px; letter-spacing: .09px; }
.b2 { margin-left: 0; }
.status label { margin-left: 11px; width: 61px; letter-spacing: 0; }
.vcb { width: 200px; height: 25px; background: #fff; border: 1px solid #a5b6d6; padding-left: 3px; line-height: 24px; align-self: flex-end; }

.taskbar { height: 40px; flex: none; background: linear-gradient(90deg, #1b2a2e 0, #1b2a2e 40%, #474747 60%, #474747 94%, #1f3036); display: flex; justify-content: space-between; color: #fff; }
.apps { display: flex; }
.apps span { width: 48.950px; display: flex; justify-content: center; align-items: center; }
.apps svg { width: 26px; height: 26px; }
.apps .run { background: linear-gradient(#76b9ed, #76b9ed) center bottom / 40px 2px no-repeat; }
.apps .now { background: linear-gradient(#76b9ed, #76b9ed) center bottom / 100% 2px no-repeat #48565b; }
.systray { display: flex; align-items: center; width: 504px; }
.temp { width: 30px; margin-left: 8px; font-size: 13.500px; letter-spacing: -.4px; }
.cond { width: 98px; margin-left: 8px; font-size: 13.500px; letter-spacing: -.25px; }
.tr { margin-left: 8px; }
.lang { width: 26px; font-size: 11px; margin-left: -7px; }
.clock { width: 80px; margin-left: -6px; text-align: center; font-size: 11.500px; line-height: 18px; letter-spacing: -.3px; }
.note { margin: 6px 0 0 4px; }
```
